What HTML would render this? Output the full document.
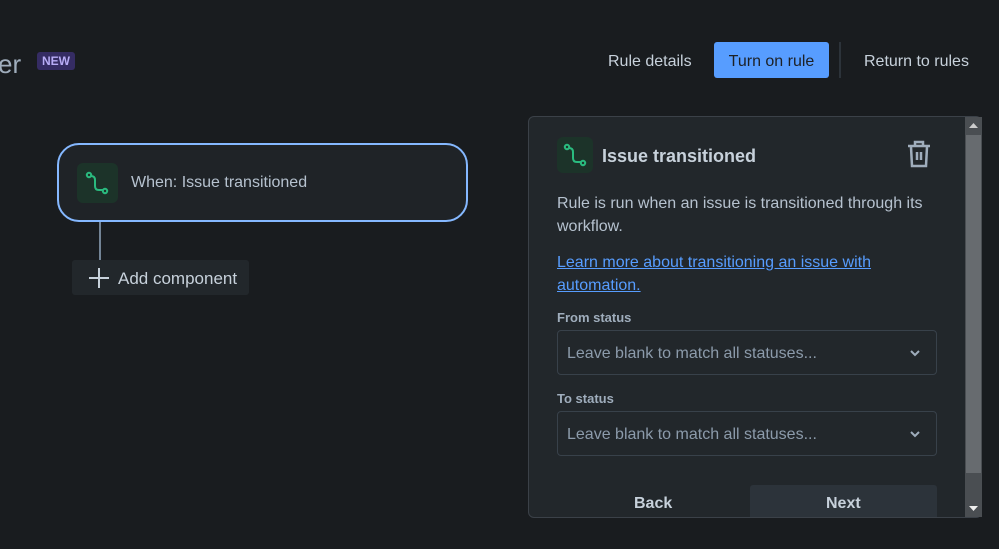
<!DOCTYPE html>
<html><head><style>
body{margin:0;width:999px;height:549px;background:#191c1f;font-family:"Liberation Sans",sans-serif;overflow:hidden;position:relative;color:#b6c2cf}
.a{position:absolute}
.ico{background:#1c3329;border-radius:6px}
.sel{position:absolute;left:557px;width:380px;height:45px;background:#22272b;border:1px solid #38414a;border-radius:4px;box-sizing:border-box}
.sel span{position:absolute;left:9px;top:14px;font-size:16px;color:#8c9bab}
.sel svg{position:absolute;right:16px;top:19px}
</style></head><body>
<div class="a" style="left:-2px;top:49px;font-size:26px;color:#9fadbc">er</div>
<div class="a" style="left:37px;top:52px;width:38px;height:18px;background:#352c63;border-radius:3px;color:#b8acf6;font-size:12px;font-weight:bold;text-align:center;line-height:18px">NEW</div>

<div class="a" style="left:608px;top:53px;font-size:16px;color:#c7d1db">Rule details</div>
<div class="a" style="left:714px;top:42px;width:115px;height:36px;background:#579dff;border-radius:3px;color:#1d2125;font-size:16px;text-align:center;line-height:39px">Turn on rule</div>
<div class="a" style="left:839px;top:42px;width:2px;height:36px;background:#2c333a"></div>
<div class="a" style="left:864px;top:53px;font-size:16px;color:#c7d1db">Return to rules</div>

<div class="a" style="left:57px;top:143px;width:411px;height:79px;box-sizing:border-box;border:2px solid #85b8ff;border-radius:22px;background:#1f2327"></div>
<div class="a ico" style="left:77px;top:163px;width:41px;height:40px"></div>
<svg class="a" style="left:84px;top:170px" width="26" height="26" viewBox="0 0 26 26"><g fill="none" stroke="#2abb7f" stroke-width="2"><circle cx="5" cy="5" r="2.2"/><circle cx="21" cy="21" r="2.2"/><path d="M7 6 Q11 6 11 10 L11 16 Q11 20 15 20 L19 20"/></g></svg>
<div class="a" style="left:131px;top:174px;font-size:16px;color:#b6c2cf">When: Issue transitioned</div>
<div class="a" style="left:99px;top:222px;width:2px;height:38px;background:#738496"></div>
<div class="a" style="left:72px;top:260px;width:177px;height:35px;background:#22272b;border-radius:3px"></div>
<svg class="a" style="left:89px;top:268px" width="20" height="20"><path d="M10 0V20M0 10H20" stroke="#c7d1db" stroke-width="2"/></svg>
<div class="a" style="left:118px;top:269px;font-size:17px;color:#c7d1db">Add component</div>

<div class="a" style="left:528px;top:116px;width:454px;height:402px;box-sizing:border-box;border:1px solid #3b4148;border-radius:6px;background:#22272b"></div>
<div class="a" style="left:965px;top:117px;width:17px;height:400px;background:#4a4e52"></div>
<div class="a" style="left:966px;top:135px;width:15px;height:338px;background:#676b6f"></div>
<svg class="a" style="left:966px;top:120px" width="15" height="12"><path d="M3 8L7.5 3L12 8Z" fill="#ccc"/></svg>
<svg class="a" style="left:966px;top:502px" width="15" height="12"><path d="M3 4L7.5 9L12 4Z" fill="#eee"/></svg>

<div class="a ico" style="left:557px;top:137px;width:36px;height:36px"></div>
<svg class="a" style="left:562px;top:142px" width="26" height="26" viewBox="0 0 26 26"><g fill="none" stroke="#2abb7f" stroke-width="2"><circle cx="5" cy="5" r="2.2"/><circle cx="21" cy="21" r="2.2"/><path d="M7 6 Q11 6 11 10 L11 16 Q11 20 15 20 L19 20"/></g></svg>
<div class="a" style="left:602px;top:146px;font-size:18px;font-weight:bold;color:#c7d1db">Issue transitioned</div>
<svg class="a" style="left:906px;top:139px" width="26" height="30" viewBox="0 0 26 30"><g fill="none" stroke="#9fadbc" stroke-width="2.5"><path d="M2 7H24M9 7V3H17V7"/><path d="M5 8L6 27H20L21 8"/><path d="M11 13V21M15 13V21"/></g></svg>
<div class="a" style="left:557px;top:192px;font-size:16px;line-height:23px;width:380px;color:#b6c2cf">Rule is run when an issue is transitioned through its workflow.</div>
<div class="a" style="left:557px;top:251px;font-size:16px;line-height:23px;width:380px;color:#579dff;text-decoration:underline">Learn more about transitioning an issue with automation.</div>
<div class="a" style="left:557px;top:310px;font-size:13px;font-weight:bold;color:#9fadbc">From status</div>
<div class="sel" style="top:330px"><span>Leave blank to match all statuses...</span><svg width="10" height="7"><path d="M1 1L5 5L9 1" fill="none" stroke="#9fadbc" stroke-width="2"/></svg></div>
<div class="a" style="left:557px;top:391px;font-size:13px;font-weight:bold;color:#9fadbc">To status</div>
<div class="sel" style="top:411px"><span>Leave blank to match all statuses...</span><svg width="10" height="7"><path d="M1 1L5 5L9 1" fill="none" stroke="#9fadbc" stroke-width="2"/></svg></div>
<div class="a" style="left:634px;top:495px;font-size:16px;font-weight:bold;color:#c7d1db">Back</div>
<div class="a" style="left:750px;top:485px;width:187px;height:32px;background:#2c333a;border-radius:3px 3px 0 0"></div>
<div class="a" style="left:826px;top:495px;font-size:16px;font-weight:bold;color:#c7d1db">Next</div>
</body></html>
